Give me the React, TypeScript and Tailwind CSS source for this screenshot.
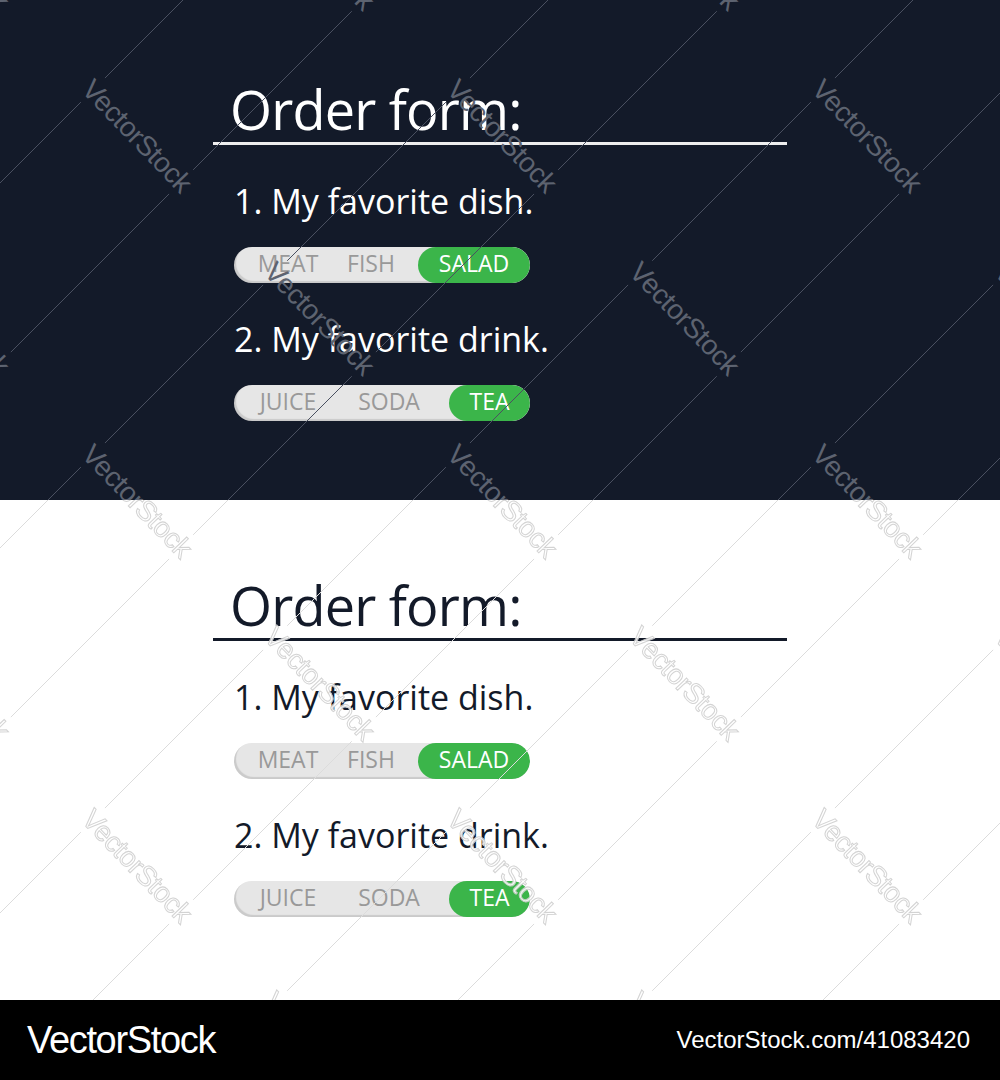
import React from "react";

type Theme = "dark" | "light";

// watermark grid, in page coordinates (page is 1000 wide, sections stacked)
const CENTERS: [number, number][] = [];
for (let k = -2; k <= 8; k++) {
  for (let m = -2; m <= 8; m++) {
    if ((k + m) % 2 !== 0) continue;
    const x = 137 + 182.5 * k;
    const y = 136 + 182.5 * m;
    if (x < -150 || x > 1150 || y < -150 || y > 1150) continue;
    CENTERS.push([x, y]);
  }
}
const LINES: number[] = [];
for (let n = -2; n <= 6; n++) {
  LINES.push(183 + 365 * n, 363 + 365 * n);
}

const Watermark = ({ theme, offsetY }: { theme: Theme; offsetY: number }) => {
  const dark = theme === "dark";
  const maskId = `wm-mask-${theme}`;
  return (
    <svg
      className="pointer-events-none absolute inset-0 h-full w-full"
      viewBox={`0 ${offsetY} 1000 500`}
    >
      <defs>
        <mask id={maskId} maskUnits="userSpaceOnUse" x="-600" y="-600" width="2200" height="2600">
          <rect x="-600" y="-600" width="2200" height="2600" fill="white" />
          {CENTERS.map(([x, y]) => (
            <rect
              key={`m${x}-${y}`}
              x={x - 86}
              y={y - 17}
              width="172"
              height="34"
              transform={`rotate(46 ${x} ${y})`}
              fill="black"
            />
          ))}
        </mask>
      </defs>
      <g mask={`url(#${maskId})`} stroke={dark ? "#4a5060" : "#dcdcdc"} strokeWidth="1">
        {LINES.map((s) => (
          <line key={s} x1={s + 300} y1={-300} x2={s - 1500} y2={1500} />
        ))}
      </g>
      {CENTERS.map(([x, y]) => (
        <text
          key={`t${x}-${y}`}
          x={x}
          y={y}
          textAnchor="middle"
          dominantBaseline="central"
          transform={`rotate(46 ${x} ${y})`}
          fontFamily="'Liberation Sans', Arial, sans-serif"
          fontSize="28"
          letterSpacing="-0.5"
          fill={dark ? "#5d6370" : "#ffffff"}
          stroke={dark ? "none" : "#cfcfcf"}
          strokeWidth={dark ? 0 : 1}
          opacity={dark ? 1 : 0.9}
        >
          VectorStock
        </text>
      ))}
    </svg>
  );
};

interface Option {
  label: string;
  width: string;
}

const Choice = ({ options, active }: { options: Option[]; active: Option }) => (
  <div className="mt-[29px] ml-[21px] flex h-9 w-[296px] overflow-hidden rounded-full bg-[#e6e6e6] shadow-[inset_2px_-2px_1px_rgba(0,0,0,0.12)]">
    {options.map((o) => (
      <div
        key={o.label}
        className={`flex h-full items-center justify-center pb-[4px] text-[23px] leading-none text-[#999999] ${o.width}`}
      >
        {o.label}
      </div>
    ))}
    <div
      className={`ml-auto flex h-full items-center justify-center rounded-full bg-[#3bb54a] pb-[4px] text-[23px] leading-none text-white ${active.width}`}
    >
      {active.label}
    </div>
  </div>
);

const Section = ({ theme }: { theme: Theme }) => {
  const dark = theme === "dark";
  return (
    <section
      className={
        dark
          ? "relative h-[500px] overflow-hidden bg-[#131a29] pt-[82px]"
          : "relative h-[500px] overflow-hidden bg-white pt-[78px]"
      }
    >
      <div
        className={
          dark
            ? "ml-[213px] w-[574px] font-['Open_Sans',sans-serif] text-white"
            : "ml-[213px] w-[574px] font-['Open_Sans',sans-serif] text-[#131a29]"
        }
      >
        <h1
          className={
            dark
              ? "border-b-[3px] border-[#eeeeee] pb-[6px] pl-[17px] text-[54px] leading-[54px] tracking-[-0.015em]"
              : "border-b-[3px] border-[#131a29] pb-[6px] pl-[17px] text-[54px] leading-[54px] tracking-[-0.015em]"
          }
        >
          Order form:
        </h1>
        <p className="mt-[39px] pl-[21px] text-[34px] leading-[34px]">1. My favorite dish.</p>
        <Choice
          options={[
            { label: "MEAT", width: "w-[108px]" },
            { label: "FISH", width: "w-[58px]" },
          ]}
          active={{ label: "SALAD", width: "w-[112px]" }}
        />
        <p className="mt-[39px] pl-[21px] text-[34px] leading-[34px]">2. My favorite drink.</p>
        <Choice
          options={[
            { label: "JUICE", width: "w-[108px]" },
            { label: "SODA", width: "w-[94px]" },
          ]}
          active={{ label: "TEA", width: "w-[81px]" }}
        />
      </div>
      <Watermark theme={theme} offsetY={dark ? 0 : 500} />
    </section>
  );
};

export default function App() {
  return (
    <div className="w-[1000px]">
      <Section theme="dark" />
      <Section theme="light" />
      <footer className="flex h-20 items-center justify-between bg-black pl-[27px] pr-[30px] font-['Liberation_Sans',Arial,sans-serif] text-white">
        <span className="text-[38px] leading-none tracking-[-0.035em]">VectorStock</span>
        <span className="text-[24px] leading-none">VectorStock.com/41083420</span>
      </footer>
    </div>
  );
}
